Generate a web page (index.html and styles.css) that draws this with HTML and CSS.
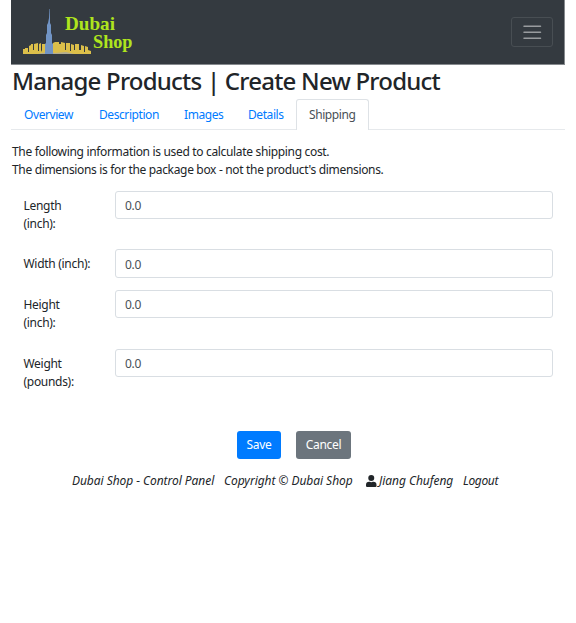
FILE: index.html
```html
<!DOCTYPE html>
<html lang="en">
<head>
<meta charset="utf-8">
<title>Create New Product</title>
<link rel="stylesheet" href="styles.css">
</head>
<body>
<div class="container">
  <nav class="navbar">
    <svg class="logo" width="112" height="48" viewBox="0 0 112 48" aria-label="Dubai Shop">
      <path class="city" d="M0 46V41H2V40H5V44H6V38L8 37V36H10V42H11V36L15 35V43H16V36L18 35V44L19 42V36H22V41H30V35L32 34H36V36H38V34L42 35V42H43V35H47V43H48V36L51 37V42H52V36H56V42H58V37L61 38V44H62V38L65 39V42L68 43V46Z"/>
      <path class="ground" d="M15 46Q23 43 32 45L43 44L51 46Z"/>
      <path class="tower" d="M26 1V10L25 15L24 17V25L23 27V35L22 36V46H30V36L29 35V27L28 25V17L27 15V10L26.5 1Z"/>
      <text class="brand" x="42" y="22" textLength="50" lengthAdjust="spacingAndGlyphs">Dubai</text>
      <text class="brand" x="70" y="40" textLength="39.5" lengthAdjust="spacingAndGlyphs">Shop</text>
    </svg>
    <button class="toggler" aria-label="Menu"><svg width="22.5" height="22.5" viewBox="0 0 30 30"><path d="M4 7h22M4 15h22M4 23h22"/></svg></button>
  </nav>
  <h2>Manage Products | Create New Product</h2>
  <ul class="tabs">
    <li class="t1"><a>Overview</a></li>
    <li class="t2"><a>Description</a></li>
    <li class="t3"><a>Images</a></li>
    <li class="t4"><a>Details</a></li>
    <li class="t5 active"><a>Shipping</a></li>
  </ul>
  <p class="intro">The following information is used to calculate shipping cost.<br>The dimensions is for the package box - not the product's dimensions.</p>
  <form>
    <div class="row"><label>Length<br>(inch):</label><input value="0.0"></div>
    <div class="row"><label>Width (inch):</label><input value="0.0"></div>
    <div class="row"><label>Height<br>(inch):</label><input value="0.0"></div>
    <div class="row"><label>Weight<br>(pounds):</label><input value="0.0"></div>
    <div class="actions"><button type="button" class="btn save">Save</button><button type="button" class="btn cancel">Cancel</button></div>
  </form>
  <footer>
    <span class="f1">Dubai Shop - Control Panel</span>
    <span class="f2">Copyright © Dubai Shop</span>
    <svg class="user" width="10.5" height="12" viewBox="0 0 448 512"><path d="M224 256a128 128 0 1 0 0-256 128 128 0 0 0 0 256zm90 32h-17a174 174 0 0 1-146 0h-17A134 134 0 0 0 0 422v42a48 48 0 0 0 48 48h352a48 48 0 0 0 48-48v-42a134 134 0 0 0-134-134z"/></svg>
    <span class="f3">Jiang Chufeng</span>
    <span class="f4">Logout</span>
  </footer>
</div>
</body>
</html>
```
FILE: styles.css
```css
* { box-sizing: border-box; }
body {
  margin: 0;
  background: #fff;
  color: #212529;
  font: 12px/18px "Segoe UI", "Noto Sans", sans-serif;
  letter-spacing: -0.33px;
}
.container { width: 554px; margin-left: 11px; }
.navbar {
  height: 65px;
  padding: 0 12px;
  display: flex;
  align-items: center;
  justify-content: space-between;
  background: #343a40;
  border: solid #868a8e;
  border-width: 0 1px 1px 0;
}
.logo { display: block; margin-top: -1px; }
.city { fill: #dcbf4a; }
.ground { fill: #b3ad91; }
.tower { fill: #7194c5; }
.brand { fill: #afe51d; font: bold 19px "Liberation Serif", serif; letter-spacing: 0; }
.toggler {
  width: 42px;
  height: 30px;
  margin-right: -1px;
  padding: 0;
  display: grid;
  place-items: center;
  background: none;
  border: 1px solid #484e53;
  border-radius: 3px;
}
.toggler path { fill: none; stroke: #999c9f; stroke-width: 2; stroke-linecap: round; }
h2 {
  height: 34px;
  margin: 0;
  padding-left: 1px;
  font-size: 24px;
  font-weight: 500;
  line-height: 31px;
  letter-spacing: -0.77px;
  white-space: nowrap;
}
.tabs {
  height: 31px;
  margin: 0;
  padding: 0;
  display: flex;
  list-style: none;
  letter-spacing: -0.42px;
  border-bottom: 1px solid #e6e9ec;
}
.tabs li {
  height: 31px;
  padding: 6px 0 0 12px;
  border: 1px solid transparent;
  border-bottom: 0;
  border-radius: 3px 3px 0 0;
  color: #007bff;
  white-space: nowrap;
}
.t1 { width: 75px; }
.t2 { width: 85px; }
.t3 { width: 64px; }
.t4 { width: 61px; }
.t5 { width: 73px; }
.tabs .active { background: #fff; border-color: #dee2e6; color: #495057; }
.intro { margin: 13px 0 11.5px 1px; white-space: nowrap; }
.row {
  display: grid;
  grid-template-columns: 92px 438px;
  margin: 0 0 12px 12px;
  align-items: start;
}
.row label { padding: 6px 0 0 0.5px; line-height: 18px; letter-spacing: -0.3px; }
.row label:has(br) { padding-bottom: 4.75px; }
.row input {
  width: 438px;
  height: 28.5px;
  padding: 1px 9px 0;
  border: 1px solid #d9dee3;
  border-radius: 3px;
  background: #fff;
  color: #495057;
  font: inherit;
  letter-spacing: -0.3px;
}
.actions { display: flex; gap: 15px; margin: 35.25px 0 0 226px; }
.btn {
  height: 28.5px;
  padding: 0;
  border: 0;
  border-radius: 3px;
  color: #fff;
  font: inherit;
  letter-spacing: -0.3px;
}
.save { width: 44px; background: #007bff; }
.cancel { width: 55px; background: #6c757d; }
footer {
  display: flex;
  align-items: center;
  margin: 13px 0 0 61px;
  font-style: italic;
  letter-spacing: -0.05px;
  white-space: nowrap;
}
.f1 { width: 152px; }
.f2 { width: 142px; }
.user { fill: #212529; margin-right: 2.5px; }
.f3 { width: 84px; }
.f4 { letter-spacing: -0.35px; }
```
